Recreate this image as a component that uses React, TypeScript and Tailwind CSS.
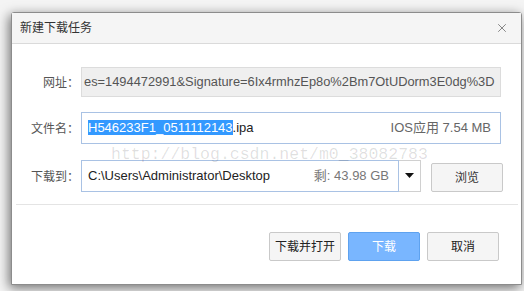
import { X } from "lucide-react";

const cjk = { fontFamily: '"Liberation Sans", "Noto Sans CJK SC", sans-serif' };
const label = { fontFamily: '"Noto Sans CJK SC", sans-serif' };

function Row({ text, children }: { text: string; children: React.ReactNode }) {
  return (
    <div className="flex items-center">
      <div className="w-[64px] pr-[2px] text-right text-[12px] leading-none text-[#555]" style={label}>{text}</div>
      {children}
    </div>
  );
}

export default function App() {
  return (
    <div className="relative h-[291px] w-[524px] overflow-hidden bg-[#f4f4f4]" style={cjk}>
      <div className="ml-[11px] mt-[12px] flex h-[273px] w-[511px] flex-col rounded-t-[3px] border border-[#8c8c8c] bg-white shadow-[-2px_3px_12px_rgba(0,0,0,0.55)]">
        <div className="flex h-[31px] shrink-0 items-center justify-between border-b border-[#dadada] bg-[#f5f5f5] pl-[8px] pr-[12px]">
          <span className="text-[12px] text-[#333]">新建下载任务</span>
          <X className="h-[14px] w-[14px] text-[#777]" strokeWidth={1.5} />
        </div>

        <div className="flex flex-col gap-[15px] pl-[5px] pt-[23px]">
          <Row text="网址：">
            <div className="flex h-[30px] w-[420px] items-center overflow-hidden whitespace-nowrap border border-[#dcdcdc] bg-[#efefef] px-[2px] text-[12.85px] text-[#555]">
              es=1494472991&amp;Signature=6Ix4rmhzEp8o%2Bm7OtUDorm3E0dg%3D
            </div>
          </Row>
          <Row text="文件名：">
            <div className="flex h-[32px] w-[420px] items-center justify-between border border-[#a9c2e4] bg-white pl-[6px] pr-[9px] text-[13px]">
              <span className="whitespace-nowrap text-[#222]">
                <span className="bg-[#3399ff] text-white">H546233F1_0511112143</span>.ipa
              </span>
              <span className="text-[#666]">IOS应用 7.54 MB</span>
            </div>
          </Row>
          <Row text="下载到：">
            <div className="flex h-[32px] w-[318px] items-center justify-between border border-[#a9c2e4] bg-white pl-[6px] pr-[9px] text-[13px]">
              <span className="whitespace-nowrap text-[#222]">C:\Users\Administrator\Desktop</span>
              <span className="whitespace-nowrap text-[#777]">剩: 43.98 GB</span>
            </div>
            <div className="flex h-[32px] w-[22px] items-center justify-center border-y border-r border-[#d0d0d0] bg-white">
              <svg width="9" height="5" viewBox="0 0 9 5"><path d="M0 0h9L4.5 5z" fill="#111" /></svg>
            </div>
            <button className="ml-[10px] mt-[4px] h-[29px] w-[72px] rounded-[2px] border border-[#c9c9c9] bg-[#f5f5f5] text-[12px] text-[#333]">
              浏览
            </button>
          </Row>
        </div>

        <div className="ml-[4px] mr-[3px] mt-[12px] border-t border-[#e4e4e4]" />

        <div className="mt-[27px] flex justify-end gap-[7px] pr-[22px]">
          <button className="h-[29px] w-[72px] rounded-[2px] border border-[#c9c9c9] bg-[#f5f5f5] text-[12px] text-[#222]">下载并打开</button>
          <button className="h-[29px] w-[72px] rounded-[2px] border border-[#5ea2ef] bg-[#79b6ff] text-[12px] text-white">下载</button>
          <button className="h-[29px] w-[72px] rounded-[2px] border border-[#c9c9c9] bg-[#f5f5f5] text-[12px] text-[#222]">取消</button>
        </div>
      </div>

      <div
        className="pointer-events-none absolute left-[111px] top-[145px] text-[16.5px] leading-[20px] text-[#000]/[0.13]"
        style={{ fontFamily: '"Liberation Mono", monospace' }}
      >
        http://blog.csdn.net/m0_38082783
      </div>
    </div>
  );
}
